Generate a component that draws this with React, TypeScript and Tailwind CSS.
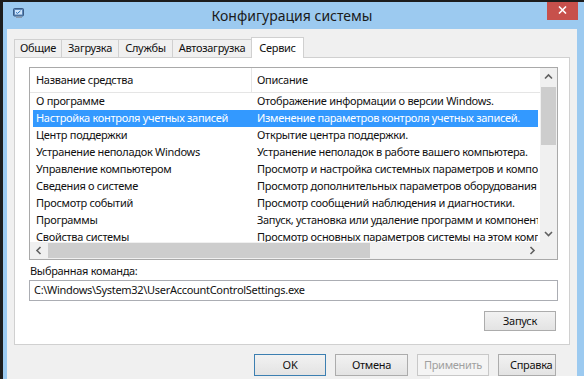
import React from "react";

const rows: [string, string][] = [
  ["О программе", "Отображение информации о версии Windows."],
  ["Настройка контроля учетных записей", "Изменение параметров контроля учетных записей."],
  ["Центр поддержки", "Открытие центра поддержки."],
  ["Устранение неполадок Windows", "Устранение неполадок в работе вашего компьютера."],
  ["Управление компьютером", "Просмотр и настройка системных параметров и компонентов."],
  ["Сведения о системе", "Просмотр дополнительных параметров оборудования и программ."],
  ["Просмотр событий", "Просмотр сообщений наблюдения и диагностики."],
  ["Программы", "Запуск, установка или удаление программ и компонентов Windows."],
  ["Свойства системы", "Просмотр основных параметров системы на этом компьютере."],
];

function Chevron({ dir }: { dir: "up" | "down" | "left" | "right" }) {
  const pts: Record<string, string> = {
    up: "1,5.5 4.5,2 8,5.5",
    down: "1,2 4.5,5.5 8,2",
    left: "5.5,1 2,4.5 5.5,8",
    right: "2.5,1 6,4.5 2.5,8",
  };
  const vertical = dir === "up" || dir === "down";
  return (
    <svg width={vertical ? 9 : 8} height={vertical ? 7 : 9} viewBox={vertical ? "0 0 9 7" : "0 0 8 9"}>
      <polyline points={pts[dir]} fill="none" stroke="#606060" strokeWidth="1.6" />
    </svg>
  );
}

export default function App() {
  return (
    <div className="relative w-[584px] h-[379px] overflow-hidden bg-[#9ccaf0] border-l-[3px] border-t-[2px] border-[#1c1c1c] flex flex-col font-['Noto_Sans',sans-serif] text-[11px] tracking-[-0.3px] text-[#111]">
      {/* title bar */}
      <div className="h-[27px] grid grid-cols-[1fr_auto_1fr] pr-[3px]">
        <div className="pl-[10px] pt-[6px]">
          <svg width="11" height="11" viewBox="0 0 11 11">
            <rect x="0.5" y="0.5" width="10" height="7.5" rx="1" fill="#5d87b8" stroke="#3b5d86" />
            <rect x="2" y="2" width="7" height="4.5" fill="#cfe5fa" />
            <polyline points="3,4.3 4.4,5.5 7.5,2.8" fill="none" stroke="#2a6fb8" strokeWidth="1" />
            <rect x="3" y="8.5" width="6" height="1.5" fill="#8a9bb0" />
          </svg>
        </div>
        <div className="text-[14px] tracking-normal leading-[27px] text-[#1a1a1a]">Конфигурация системы</div>
        <div />
      </div>
      <div className="absolute -top-[2px] right-[6px] w-[31px] h-[20px] bg-[#c7504b] flex items-center justify-center">
        <svg width="9" height="8" viewBox="0 0 9 8">
          <path d="M1 0.5 L8 7.5 M8 0.5 L1 7.5" stroke="#fff" strokeWidth="1.6" />
        </svg>
      </div>

      {/* dialog content */}
      <div className="flex-1 ml-[4px] mr-[7px] bg-[#f0f0f0] pl-[7px] pr-[7px] pt-[8px] flex flex-col">
        {/* tabs */}
        <div className="flex items-end h-[21px] relative z-10">
          <div className="w-[47px] h-[18px] mb-px border-l border-t border-[#d0d0d0] flex items-center justify-center">Общие</div>
          <div className="w-[57px] h-[18px] mb-px border-l border-t border-[#d0d0d0] flex items-center justify-center">Загрузка</div>
          <div className="w-[54px] h-[18px] mb-px border-l border-t border-[#d0d0d0] flex items-center justify-center">Службы</div>
          <div className="w-[79px] h-[18px] mb-px border-l border-t border-[#d0d0d0] flex items-center justify-center">Автозагрузка</div>
          <div className="w-[53px] h-[21px] border-l border-t border-r border-[#d0d0d0] bg-white flex items-start justify-center pt-[2px]">Сервис</div>
        </div>

        {/* panel */}
        <div className="-mt-px h-[288px] border border-[#d0d0d0] bg-white pt-[9px] pl-[14px] pr-[11px] flex flex-col">
          {/* listview */}
          <div className="h-[193px] border border-[#a9a9a9] flex flex-col">
            <div className="flex flex-1 min-h-0">
              <div className="flex-1 min-w-0 overflow-hidden flex flex-col">
                <div className="h-[25px] shrink-0 flex border-b border-[#e5e5e5]">
                  <div className="w-[222px] border-r border-[#e5e5e5] pl-[6px] flex items-center">Название средства</div>
                  <div className="pl-[5px] flex items-center whitespace-nowrap">Описание</div>
                </div>
                {rows.map(([name, desc], i) => {
                  const sel = i === 1;
                  return (
                    <div key={name} className="h-[17px] shrink-0 flex pl-[3px] pr-[2px]">
                      <div className={`flex-1 min-w-0 flex items-center overflow-hidden whitespace-nowrap ${sel ? "bg-[#3399ff] text-white" : ""}`}>
                        <div className="w-[218px] shrink-0 pl-[3px] overflow-hidden">{name}</div>
                        <div className="pl-[6px]">{desc}</div>
                      </div>
                    </div>
                  );
                })}
              </div>
              <div className="w-[17px] shrink-0 bg-[#f0f0f0] flex flex-col">
                <div className="h-[17px] flex items-center justify-center"><Chevron dir="up" /></div>
                <div className="mx-px mt-[2px] h-[58px] bg-[#cdcdcd]" />
                <div className="flex-1" />
                <div className="h-[17px] flex items-center justify-center"><Chevron dir="down" /></div>
              </div>
            </div>
            <div className="h-[17px] shrink-0 flex">
              <div className="flex-1 bg-[#f0f0f0] flex items-center">
                <div className="w-[17px] flex justify-center"><Chevron dir="left" /></div>
                <div className="ml-px w-[322px] h-[15px] bg-[#cdcdcd]" />
                <div className="flex-1" />
                <div className="w-[17px] flex justify-center"><Chevron dir="right" /></div>
              </div>
              <div className="w-[17px] bg-[#f0f0f0]" />
            </div>
          </div>

          <div className="mt-[3px] leading-[15px] pl-[1px]">Выбранная команда:</div>
          <div className="mt-[2px] h-[21px] border border-[#abadb3] px-[4px] flex items-center whitespace-nowrap">
            C:\Windows\System32\UserAccountControlSettings.exe
          </div>
          <div className="mt-[10px] self-end mr-[2px] w-[72px] h-[20px] border border-[#acacac] bg-gradient-to-b from-[#f2f2f2] to-[#e3e3e3] flex items-center justify-center">
            Запуск
          </div>
        </div>

        {/* dialog buttons */}
        <div className="mt-[9px] mr-[14px] flex justify-end gap-[9px]">
          <div className="w-[72px] h-[22px] border border-[#3c7fb1] bg-gradient-to-b from-[#f2f2f2] to-[#e3e3e3] flex items-center justify-center">OK</div>
          <div className="w-[73px] h-[22px] border border-[#acacac] bg-gradient-to-b from-[#f2f2f2] to-[#e3e3e3] flex items-center justify-center">Отмена</div>
          <div className="w-[72px] h-[22px] border border-[#c8c8c8] bg-[#f4f4f4] text-[#a0a0a0] flex items-center justify-center">Применить</div>
          <div className="w-[58px] h-[22px] border border-[#acacac] bg-gradient-to-b from-[#f2f2f2] to-[#e3e3e3] flex items-center pl-[11px] overflow-hidden whitespace-nowrap">Справка</div>
        </div>
      </div>

      <div className="absolute left-[427px] right-0 bottom-0 h-[3px] bg-white" />
    </div>
  );
}
